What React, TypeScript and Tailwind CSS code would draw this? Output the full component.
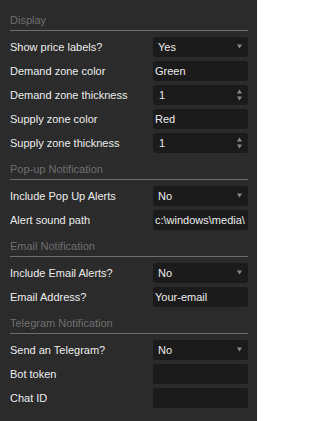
import React from "react";

type Row = {
  label: string;
  kind: "select" | "text" | "number";
  value: string;
};

type Section = {
  title: string;
  rows: Row[];
};

const sections: Section[] = [
  {
    title: "Display",
    rows: [
      { label: "Show price labels?", kind: "select", value: "Yes" },
      { label: "Demand zone color", kind: "text", value: "Green" },
      { label: "Demand zone thickness", kind: "number", value: "1" },
      { label: "Supply zone color", kind: "text", value: "Red" },
      { label: "Supply zone thickness", kind: "number", value: "1" },
    ],
  },
  {
    title: "Pop-up Notification",
    rows: [
      { label: "Include Pop Up Alerts", kind: "select", value: "No" },
      { label: "Alert sound path", kind: "text", value: "c:\\windows\\media\\" },
    ],
  },
  {
    title: "Email Notification",
    rows: [
      { label: "Include Email Alerts?", kind: "select", value: "No" },
      { label: "Email Address?", kind: "text", value: "Your-email" },
    ],
  },
  {
    title: "Telegram Notification",
    rows: [
      { label: "Send an Telegram?", kind: "select", value: "No" },
      { label: "Bot token", kind: "text", value: "" },
      { label: "Chat ID", kind: "text", value: "" },
    ],
  },
];

function Field({ row }: { row: Row }) {
  return (
    <div className="flex h-[20px] items-center">
      <div className="flex-1 text-[11px] leading-[14px] text-[#ebebeb]">{row.label}</div>
      <div className="relative flex h-[20px] w-[95px] items-center overflow-hidden rounded-[3px] bg-[#1b1b1b]">
        {row.kind === "select" && (
          <>
            <span className="pl-[5px] text-[11px] leading-[14px] text-[#ebebeb]">{row.value}</span>
            {/* dropdown caret */}
            <svg className="absolute right-[6px] top-[7px]" width="5" height="5" viewBox="0 0 5 5">
              <path d="M0 0.5H5L2.5 4.5Z" fill="#8a8a8a" />
            </svg>
          </>
        )}
        {row.kind === "text" && (
          <span className="whitespace-nowrap pl-[2px] text-[11px] leading-[14px] text-[#ebebeb]">
            {row.value}
          </span>
        )}
        {row.kind === "number" && (
          <>
            <span className="pl-[6px] text-[11px] leading-[14px] text-[#ebebeb]">{row.value}</span>
            {/* spinner arrows */}
            <svg className="absolute right-[6px] top-[4px]" width="5" height="12" viewBox="0 0 5 12">
              <path d="M2.5 0.5L5 4.5H0Z" fill="#8a8a8a" />
              <path d="M0 7.5H5L2.5 11.5Z" fill="#8a8a8a" />
            </svg>
          </>
        )}
      </div>
    </div>
  );
}

export default function App() {
  return (
    <div
      className="h-[421px] w-[257px] bg-[#2b2b2b] pl-[10px] pr-[9px] pt-[13px]"
      style={{ fontFamily: '"Liberation Sans", Arial, sans-serif' }}
    >
      {sections.map((section, i) => (
        <div key={section.title} className={i === 0 ? "" : "mt-[9px]"}>
          {/* section header */}
          <div className="border-b border-[#6e6e6e] pb-[3px] text-[11px] leading-[14px] text-[#6e6e6e]">
            {section.title}
          </div>
          <div className="mt-[6px] flex flex-col gap-[4px]">
            {section.rows.map((row) => (
              <Field key={row.label} row={row} />
            ))}
          </div>
        </div>
      ))}
    </div>
  );
}
